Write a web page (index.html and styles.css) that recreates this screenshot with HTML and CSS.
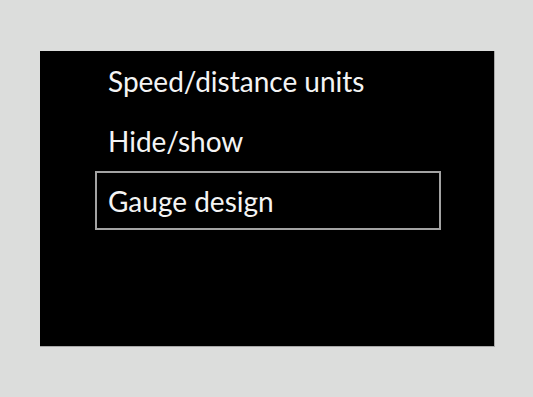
FILE: index.html
```html
<!DOCTYPE html>
<html lang="en">
<head>
    <meta charset="UTF-8">
    <meta name="viewport" content="width=device-width, initial-scale=1.0">
    <title>Settings</title>
    <link rel="stylesheet" href="styles.css">
</head>
<body>
    <div class="screen">
        <ul class="menu">
            <li class="item">Speed/distance units</li>
            <li class="item">Hide/show</li>
            <li class="item active">Gauge design</li>
        </ul>
    </div>
</body>
</html>
```

FILE: styles.css
```css
html,
body,
ul {
    margin: 0;
    padding: 0;
}
ul {
    list-style: none;
}
body {
    background-color: #dcdddc;
    font-family: "Lato", "Liberation Sans", sans-serif;
    padding: 51px 0 0 40px;
}
.screen {
    width: 454px;
    height: 295px;
    background-color: #000;
    border-right: 1px solid #a8a8a8;
    border-bottom: 1px solid #a8a8a8;
}
.menu {
    display: flex;
    flex-direction: column;
    gap: 1px;
    width: 346px;
    margin-left: 55px;
}
.item {
    height: 55px;
    border: 2px solid transparent;
    padding-left: 11px;
    display: flex;
    align-items: center;
    color: #f4f4f4;
    font-size: 28px;
}
.item.active {
    border-color: #a3a3a3;
}
```
